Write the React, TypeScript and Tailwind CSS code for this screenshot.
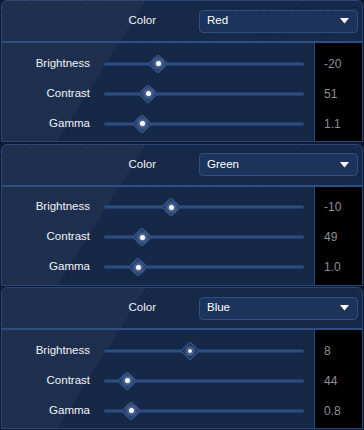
interface SliderRow {
  label: string;
  value: string;
  pos: number; // thumb centre in px from track start
  focused?: boolean;
}

interface Channel {
  name: string;
  rows: SliderRow[];
}

const channels: Channel[] = [
  {
    name: "Red",
    rows: [
      { label: "Brightness", value: "-20", pos: 54 },
      { label: "Contrast", value: "51", pos: 44 },
      { label: "Gamma", value: "1.1", pos: 38 },
    ],
  },
  {
    name: "Green",
    rows: [
      { label: "Brightness", value: "-10", pos: 67 },
      { label: "Contrast", value: "49", pos: 38 },
      { label: "Gamma", value: "1.0", pos: 34 },
    ],
  },
  {
    name: "Blue",
    rows: [
      { label: "Brightness", value: "8", pos: 86, focused: true },
      { label: "Contrast", value: "44", pos: 23 },
      { label: "Gamma", value: "0.8", pos: 27 },
    ],
  },
];

const Thumb = ({ pos, focused }: { pos: number; focused?: boolean }) => (
  <div
    className="absolute top-1/2 w-[20px] h-[20px] -translate-x-1/2 -translate-y-1/2 flex items-center justify-center"
    style={{ left: pos }}
  >
    <div className="absolute w-[14px] h-[14px] rotate-45 rounded-[2px] bg-[#1f3a68] border border-[#34558c]" />
    {focused ? (
      <div className="relative w-[6px] h-[6px] rounded-full bg-white border border-[#1f3a68] shadow-[0_0_3px_rgba(255,255,255,0.8)]" />
    ) : (
      <div className="relative w-[5px] h-[5px] rounded-full bg-white shadow-[0_0_4px_2px_rgba(200,220,255,0.45)]" />
    )}
  </div>
);

const Panel = ({ channel }: { channel: Channel }) => (
  <div className="relative h-[142px] mx-[1px] rounded-t-[6px] border border-[#2c4775] bg-[#162848] flex flex-col overflow-hidden">
    {/* sheen */}
    <div className="pointer-events-none absolute inset-0 bg-[linear-gradient(122deg,rgba(255,255,255,0.035)_0%,rgba(255,255,255,0.035)_32%,transparent_32%)]" />
    {/* Header */}
    <div className="relative h-[42px] flex items-center border-b-2 border-[#2f4f82] bg-[repeating-linear-gradient(135deg,rgba(255,255,255,0.012)_0px,rgba(255,255,255,0.012)_2px,transparent_2px,transparent_5px)]">
      <span className="w-[154px] text-right text-[11.5px] text-[#f0f3f8]">Color</span>
      <div className="ml-[43px] w-[159px] h-[23px] rounded-[4px] border border-[#2f4f82] bg-[#1c345c] flex items-center justify-between pl-[7px] pr-[8px]">
        <span className="text-[11.5px] text-white">{channel.name}</span>
        <svg width="9" height="6" viewBox="0 0 9 6">
          <path d="M0 0H9L4.5 5.5Z" fill="#ffffff" />
        </svg>
      </div>
    </div>
    {/* Body */}
    <div className="relative flex-1 flex">
      <div className="flex-1 flex flex-col pt-[5.5px]">
        {channel.rows.map((row) => (
          <div key={row.label} className="h-[30px] flex items-center">
            <span className="w-[88px] text-right text-[11.5px] text-[#f0f3f8]">{row.label}</span>
            <div className="relative ml-[14px] w-[200px] h-[4px] rounded-full bg-[#2e4d80] border-y border-[#213c69]">
              <Thumb pos={row.pos} focused={row.focused} />
            </div>
          </div>
        ))}
      </div>
      <div className="w-[48px] bg-black border-l border-[#2c4775] flex flex-col pt-[5.5px]">
        {channel.rows.map((row) => (
          <div key={row.label} className="h-[30px] flex items-center pl-[9px] text-[12px] text-[#8f8f8f]">
            {row.value}
          </div>
        ))}
      </div>
    </div>
  </div>
);

export default function App() {
  return (
    <div
      className="w-[364px] h-[430px] bg-[#0f1b33] flex flex-col gap-[1.5px] overflow-hidden"
      style={{ fontFamily: '"Liberation Sans", Arial, sans-serif' }}
    >
      {channels.map((c) => (
        <Panel key={c.name} channel={c} />
      ))}
    </div>
  );
}
